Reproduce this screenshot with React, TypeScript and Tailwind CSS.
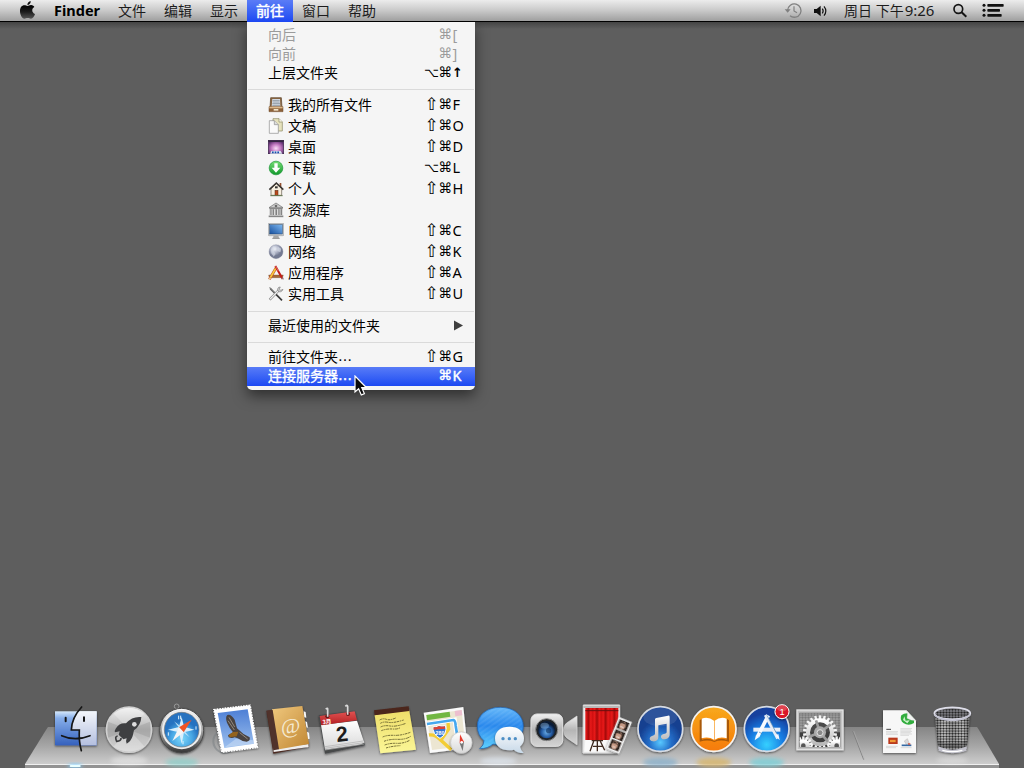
import type { ReactNode } from "react";

const UI_FONT = "font-['Noto_Sans','Noto_Sans_CJK_SC',sans-serif]";

/* ---------- menu bar ---------- */

function MenuBar() {
  return (
    <header className="relative flex h-[22px] w-full items-stretch border-b border-black bg-linear-to-b from-[#ececec] via-[#c9c9c9] to-[#9f9f9f] text-[14px] leading-[21px] text-[#1c1c1c]">
      <svg className="ml-[19px] h-[21px] w-[17px]" viewBox="57 0 51 63">
        <defs>
          <linearGradient id="apple" x1="0" y1="0" x2="0" y2="1">
            <stop offset="0" stopColor="#000" />
            <stop offset=".5" stopColor="#1c1c1c" />
            <stop offset="1" stopColor="#555" />
          </linearGradient>
        </defs>
        <path d="M82 15C82 8 87 4 92 3C93 10 88 15 82 15Z" fill="#111" />
        <path d="M82 18C86 18 88 15 93 15C98 15 102 18 103 21C94 26 95 38 105 42C103 49 98 56 93 56C89 56 87 54 83 54C79 54 77 56 73 56C66 56 60 44 60 34C60 22 66 16 73 16C77 16 80 18 82 18Z" fill="url(#apple)" />
      </svg>
      <span className="ml-[18px] w-[55px] text-[14.5px] font-bold text-black">Finder</span>
      <nav className="flex">
        <span className="w-[46px] pl-[9px]">文件</span>
        <span className="w-[46px] pl-[9px]">编辑</span>
        <span className="w-[46px] pl-[9px]">显示</span>
        <span className="z-10 h-[22px] w-[46px] bg-linear-to-b from-[#5b7cf6] to-[#1c46f2] pl-[9px] text-white [-webkit-text-stroke:0.5px_white]">前往</span>
        <span className="w-[46px] pl-[9px]">窗口</span>
        <span className="w-[46px] pl-[9px]">帮助</span>
      </nav>
      <div className="ml-auto flex pr-[20px]">
        <svg className="h-[21px] w-[19px]" viewBox="131 0 57 63" fill="none" stroke="#808080" strokeWidth="4">
          <path d="M142 31A20 20 0 1 1 149 47" />
          <path d="M133 28L142 38L151 28Z" fill="#808080" stroke="none" />
          <path d="M161 19V33L170 38" strokeWidth="3.5" />
        </svg>
        <svg className="ml-[10px] h-[21px] w-[16px]" viewBox="219 0 48 63">
          <path d="M222 27H230L242 17V49L230 39H222Z" fill="#111" />
          <path d="M247 26Q252 33 247 40M252 19Q263 33 252 47" fill="none" stroke="#111" strokeWidth="3.5" />
        </svg>
        <span className="ml-[15px] w-[92px] whitespace-nowrap">周日 下午<span className="ml-px text-[15px]">9:26</span></span>
        <svg className="ml-[16px] h-[21px] w-[16px]" viewBox="637 0 48 63" fill="none" stroke="#151515">
          <circle cx="656" cy="27" r="13" strokeWidth="5" />
          <path d="M665 36L680 50" strokeWidth="6" />
        </svg>
        <svg className="ml-[14px] h-[21px] w-[22px]" viewBox="727 0 66 63" fill="#111">
          <circle cx="733" cy="16" r="4.5" />
          <circle cx="733" cy="31" r="4.5" />
          <circle cx="733" cy="46" r="4.5" />
          <rect x="743" y="12" width="49" height="8" rx="2" />
          <rect x="743" y="27" width="38" height="8" rx="2" />
          <rect x="743" y="42" width="43" height="8" rx="2" />
        </svg>
      </div>
    </header>
  );
}

/* ---------- Go menu icons ---------- */

function Glyph({ y, children }: { y: number; children: ReactNode }) {
  return (
    <svg className="mr-[4px] size-4 shrink-0" viewBox={`84 ${y} 48 48`}>
      {children}
    </svg>
  );
}

const AllFilesIcon = (
  <Glyph y={291}>
    <path d="M92 293H124L126 322H90Z" fill="#8a6742" stroke="#5b4026" strokeWidth="2" />
    <path d="M97 297H120L121 320H95Z" fill="#dfe6ee" />
    <path d="M98 301H119M98 306H119M97 311H120M97 316H120" stroke="#66727f" strokeWidth="2" />
    <path d="M87 320H129V335H87Z" fill="#8e6239" stroke="#6c4724" strokeWidth="1.5" />
    <path d="M88 320H128V325H88Z" fill="#dcb98b" />
    <rect x="101" y="327" width="14" height="5" fill="#f1e5cb" />
  </Glyph>
);
const DocsIcon = (
  <Glyph y={354}>
    <path d="M99 356H117L127 366V393H99Z" fill="#e6e2bd" stroke="#88855f" strokeWidth="2" />
    <path d="M117 356V366H127" fill="#fffef0" stroke="#88855f" strokeWidth="2" />
    <path d="M88 362H103L115 374V400H88Z" fill="#fafafa" stroke="#8d8d8d" strokeWidth="2" />
    <path d="M103 362V374H115" fill="#ddd" stroke="#8d8d8d" strokeWidth="2" />
  </Glyph>
);
const DesktopIcon = (
  <Glyph y={417}>
    <defs>
      <radialGradient id="desk" cy=".6" r=".6">
        <stop offset="0" stopColor="#fbdcf8" />
        <stop offset=".5" stopColor="#c47bc2" />
        <stop offset="1" stopColor="#5a2c6c" />
      </radialGradient>
    </defs>
    <rect x="85" y="421" width="46" height="40" fill="url(#desk)" stroke="#3a2148" strokeWidth="2" />
    <rect x="85" y="421" width="46" height="5" fill="#342541" />
    <path d="M90 461L94 453H122L127 461Z" fill="#d9e2ef" />
    <path d="M96 457H101M104 457H109M112 457H117" stroke="#174cae" strokeWidth="5" />
  </Glyph>
);
const DownloadIcon = (
  <Glyph y={480}>
    <defs>
      <linearGradient id="dl" x1="0" y1="0" x2="0" y2="1">
        <stop stopColor="#78df76" />
        <stop offset="1" stopColor="#10982b" />
      </linearGradient>
    </defs>
    <circle cx="108" cy="504" r="20.5" fill="url(#dl)" stroke="#159330" strokeWidth="2" />
    <path d="M103 490H113V503H121L108 518L95 503H103Z" fill="#fff" />
  </Glyph>
);
const HomeIcon = (
  <Glyph y={543}>
    <path d="M119 549H124V566H119Z" fill="#924e2e" />
    <path d="M93 566L109 551L125 566V586H93Z" fill="#f7efdf" stroke="#5f554a" strokeWidth="2" />
    <path d="M88 569L109 549L130 569" fill="none" stroke="#393531" strokeWidth="4.5" />
    <rect x="105" y="571" width="9" height="15" fill="#ba491b" stroke="#50281a" strokeWidth="1.5" />
    <rect x="105" y="559" width="8" height="6" fill="#333" />
    <path d="M91 587H128" stroke="#61754c" strokeWidth="3" />
  </Glyph>
);
const LibraryIcon = (
  <Glyph y={21}>
    <path d="M87 38L108 24L129 38Z" fill="#ccc" stroke="#6a6a6a" strokeWidth="2" />
    <circle cx="108" cy="33" r="4" fill="#6b6b6b" />
    <path d="M88 41H128" stroke="#777" strokeWidth="3" />
    <path d="M92 43V60M100 43V60M108 43V60M116 43V60M124 43V60" stroke="#5c5c5c" strokeWidth="5" />
    <path d="M91 43V60M99 43V60M107 43V60M115 43V60M123 43V60" stroke="#d7d7d7" strokeWidth="2" />
    <path d="M86 64H130" stroke="#858585" strokeWidth="5" />
  </Glyph>
);
const ComputerIcon = (
  <Glyph y={84}>
    <defs>
      <linearGradient id="screen" x1="0" y1="1" x2="1" y2="0">
        <stop stopColor="#174f9d" />
        <stop offset="1" stopColor="#7db8f1" />
      </linearGradient>
    </defs>
    <path d="M101 121H115L117 129H99Z" fill="#aaa" />
    <rect x="85" y="85" width="46" height="37" rx="2" fill="#d2d2d2" stroke="#85898d" strokeWidth="1.5" />
    <rect x="89" y="89" width="38" height="28" fill="url(#screen)" stroke="#24466c" strokeWidth="1.5" />
    <path d="M97 130H119" stroke="#888" strokeWidth="3" />
  </Glyph>
);
const NetworkIcon = (
  <Glyph y={147}>
    <defs>
      <radialGradient id="globe" cx=".4" cy=".3">
        <stop stopColor="#f4f6fc" />
        <stop offset=".55" stopColor="#b1b6c8" />
        <stop offset="1" stopColor="#737a92" />
      </radialGradient>
    </defs>
    <circle cx="108" cy="170" r="21" fill="url(#globe)" stroke="#7e8499" />
    <path d="M93 163L101 154L108 158L101 168L107 177L101 185L94 175ZM113 155L124 161L121 172L112 168Z" fill="#d9deea" opacity=".6" />
  </Glyph>
);
const AppsIcon = (
  <Glyph y={210}>
    <path d="M86 240H130L127 248H88Z" fill="#a76938" stroke="#6e4527" />
    <path d="M108 219L88 253" stroke="#c54e22" strokeWidth="8" />
    <path d="M109 217L91 248" stroke="#f7cd3e" strokeWidth="5" />
    <path d="M106 213L128 252" stroke="#c31c19" strokeWidth="6" />
    <path d="M107 214L115 228" stroke="#e78c86" strokeWidth="2" />
    <path d="M88 247L86 256L94 251Z" fill="#ead0a4" />
    <path d="M124 249L131 255L129 247Z" fill="#888" />
  </Glyph>
);
const UtilitiesIcon = (
  <Glyph y={273}>
    <path d="M91 281L126 316" stroke="#383838" strokeWidth="5" />
    <path d="M89 279L108 298" stroke="#c5c5c5" strokeWidth="2" />
    <path d="M87 277L93 278L92 285Z" fill="#777" />
    <path d="M89 314L116 286" stroke="#777" strokeWidth="7" />
    <path d="M90 313L117 285" stroke="#eee" strokeWidth="4" />
    <path d="M121 276C114 275 111 282 114 288C119 293 127 290 129 283L122 286L118 282Z" fill="#c9c9c9" stroke="#666" strokeWidth="1.5" />
  </Glyph>
);

/* ---------- Go menu ---------- */

type Item = { label: string; keys?: string; icon?: ReactNode; disabled?: boolean; active?: boolean; submenu?: boolean };

const KEY_CLASS: Record<string, string> = {
  "⇧": "w-[14px] text-[17px]",
  "⌥": "w-[14px] text-[13px]",
  "⌘": "w-[13.5px] text-[14px]",
};

function Shortcut({ keys }: { keys: string }) {
  const parts = Array.from(keys);
  const last = parts.pop();
  return (
    <span className="ml-auto flex">
      {parts.map((k) => (
        <span key={k} className={`flex justify-center font-['DejaVu_Sans',sans-serif] ${KEY_CLASS[k]}`}>{k}</span>
      ))}
      <span className={last === "↑" ? "w-[11px] font-['DejaVu_Sans',sans-serif] text-[13px] font-bold" : "w-[11px] pl-[0.5px] text-[14.5px]"}>{last}</span>
    </span>
  );
}

function MenuItem({ item, tall }: { item: Item; tall?: boolean }) {
  return (
    <li
      className={`flex items-center pl-[21px] pr-[12px] pb-[2px] whitespace-nowrap ${tall ? "h-[21px] leading-[19px]" : "h-[19px] leading-[17px]"} ${
        item.active
          ? "bg-linear-to-b from-[#587bf7] to-[#1d48f2] text-white [-webkit-text-stroke:0.4px_white]"
          : item.disabled
            ? "text-[#9b9b9b]"
            : "text-black"
      }`}
    >
      {item.icon}
      <span>{item.label.replace("…", "")}</span>
      {item.label.endsWith("…") && <span className="tracking-normal font-['DejaVu_Sans',sans-serif]">…</span>}
      {item.keys && <Shortcut keys={item.keys} />}
      {item.submenu && (
        <svg className="ml-auto h-[11px] w-[9px]" viewBox="0 0 9 11">
          <path d="M0 .5L9 5.5L0 10.5Z" fill="#3f3f3f" />
        </svg>
      )}
    </li>
  );
}

function Separator() {
  return (
    <li className="flex h-[12px] items-center px-px">
      <span className="h-px w-full bg-[#dadada]" />
    </li>
  );
}

const NAVIGATION: Item[] = [
  { label: "向后", keys: "⌘[", disabled: true },
  { label: "向前", keys: "⌘]", disabled: true },
  { label: "上层文件夹", keys: "⌥⌘↑" },
];
const PLACES: Item[] = [
  { label: "我的所有文件", keys: "⇧⌘F", icon: AllFilesIcon },
  { label: "文稿", keys: "⇧⌘O", icon: DocsIcon },
  { label: "桌面", keys: "⇧⌘D", icon: DesktopIcon },
  { label: "下载", keys: "⌥⌘L", icon: DownloadIcon },
  { label: "个人", keys: "⇧⌘H", icon: HomeIcon },
  { label: "资源库", icon: LibraryIcon },
  { label: "电脑", keys: "⇧⌘C", icon: ComputerIcon },
  { label: "网络", keys: "⇧⌘K", icon: NetworkIcon },
  { label: "应用程序", keys: "⇧⌘A", icon: AppsIcon },
  { label: "实用工具", keys: "⇧⌘U", icon: UtilitiesIcon },
];

function GoMenu() {
  return (
    <ul className="ml-[247px] w-[228px] rounded-b-[5px] bg-[#f5f5f5] py-[4px] text-[14px] shadow-[0_6px_14px_rgba(0,0,0,0.5)]">
      {NAVIGATION.map((i) => <MenuItem key={i.label} item={i} />)}
      <Separator />
      {PLACES.map((i) => <MenuItem key={i.label} item={i} tall />)}
      <Separator />
      <MenuItem item={{ label: "最近使用的文件夹", submenu: true }} />
      <Separator />
      <MenuItem item={{ label: "前往文件夹…", keys: "⇧⌘G" }} />
      <MenuItem item={{ label: "连接服务器…", keys: "⌘K", active: true }} />
    </ul>
  );
}

/* ---------- dock ---------- */

function DockIcon({ x, children }: { x: number; children: ReactNode }) {
  return (
    <li className="w-[53px]">
      <svg className="h-[73px] w-[53px] overflow-visible" viewBox={`${x} 0 159 219`}>
        {children}
      </svg>
    </li>
  );
}

function DockDefs() {
  return (
    <svg className="absolute size-0">
      <defs>
        <linearGradient id="finderL" x1="0" y1="0" x2="0" y2="1"><stop stopColor="#d6e8fb" /><stop offset=".2" stopColor="#86aeea" /><stop offset="1" stopColor="#3561bd" /></linearGradient>
        <linearGradient id="finderR" x1="0" y1="0" x2="0" y2="1"><stop stopColor="#f3f6fb" /><stop offset="1" stopColor="#b4bfdf" /></linearGradient>
        <linearGradient id="metal" x1="0" y1="0" x2="0" y2="1"><stop stopColor="#f0f0f0" /><stop offset=".5" stopColor="#b5b5b5" /><stop offset="1" stopColor="#d4d4d4" /></linearGradient>
        <linearGradient id="rim" x1="0" y1="0" x2="0" y2="1"><stop stopColor="#fff" /><stop offset=".5" stopColor="#a7a7a7" /><stop offset="1" stopColor="#333" /></linearGradient>
        <radialGradient id="ocean" cy=".75"><stop stopColor="#7fd8fa" /><stop offset=".6" stopColor="#48a7e4" /><stop offset="1" stopColor="#2672c0" /></radialGradient>
        <linearGradient id="sky" x1="0" y1="0" x2="0" y2="1"><stop stopColor="#4d7fd5" /><stop offset="1" stopColor="#9dc0ee" /></linearGradient>
        <linearGradient id="leather" x1="0" y1="0" x2="1" y2="1"><stop stopColor="#f0c87e" /><stop offset="1" stopColor="#c08632" /></linearGradient>
        <linearGradient id="red" x1="0" y1="0" x2="0" y2="1"><stop stopColor="#e15352" /><stop offset="1" stopColor="#b31d20" /></linearGradient>
        <linearGradient id="page" x1="0" y1="0" x2="0" y2="1"><stop stopColor="#fff" /><stop offset="1" stopColor="#d8d8d8" /></linearGradient>
        <linearGradient id="note" x1="0" y1="0" x2="0" y2="1"><stop stopColor="#eedd68" /><stop offset="1" stopColor="#fbf798" /></linearGradient>
        <linearGradient id="bubble" x1="0" y1="0" x2="0" y2="1"><stop stopColor="#65b8fa" /><stop offset=".45" stopColor="#2a88ec" /><stop offset="1" stopColor="#5ed1ff" /></linearGradient>
        <linearGradient id="bubble2" x1="0" y1="0" x2="0" y2="1"><stop stopColor="#fff" /><stop offset="1" stopColor="#c8d9e8" /></linearGradient>
        <radialGradient id="lens" cx=".5" cy=".65"><stop stopColor="#6aaee8" /><stop offset=".6" stopColor="#2359a0" /><stop offset="1" stopColor="#0a1c38" /></radialGradient>
        <linearGradient id="curtain" x1="0" x2="13" y1="0" y2="0" gradientUnits="userSpaceOnUse" spreadMethod="reflect"><stop stopColor="#a30a0a" /><stop offset=".55" stopColor="#e81919" /><stop offset="1" stopColor="#d01010" /></linearGradient>
        <radialGradient id="tunes" cy=".8"><stop stopColor="#58c8ff" /><stop offset=".5" stopColor="#236dc8" /><stop offset="1" stopColor="#163f90" /></radialGradient>
        <linearGradient id="orange" x1="0" y1="0" x2="0" y2="1"><stop stopColor="#f8a91c" /><stop offset="1" stopColor="#f57a0a" /></linearGradient>
        <radialGradient id="store" cy=".85" r=".7"><stop stopColor="#35d0ff" /><stop offset=".55" stopColor="#177be2" /><stop offset="1" stopColor="#123f9d" /></radialGradient>
        <linearGradient id="gear" x1="0" y1="0" x2="0" y2="1"><stop stopColor="#fff" /><stop offset="1" stopColor="#b8b8b8" /></linearGradient>
        <linearGradient id="mesh" x1="0" x2="1"><stop stopColor="#777" /><stop offset=".25" stopColor="#c0c0c0" /><stop offset=".5" stopColor="#999" /><stop offset=".8" stopColor="#bbb" /><stop offset="1" stopColor="#666" /></linearGradient>
        <pattern id="wire" width="9" height="8" patternUnits="userSpaceOnUse"><path d="M0 4L4.500 1L9 4L4.500 7Z" fill="#1d1d1d" /></pattern>
        <pattern id="stripes" width="12" height="12" patternUnits="userSpaceOnUse" patternTransform="rotate(55)"><rect width="5" height="12" fill="#fff" opacity=".07" /></pattern>
        <filter id="soft" x="-50%" y="-50%" width="200%" height="200%"><feGaussianBlur stdDeviation="6" /></filter>
        <filter id="drop" x="-20%" y="-20%" width="140%" height="150%"><feDropShadow dx="0" dy="3" stdDeviation="3" floodOpacity=".55" /></filter>
      </defs>
    </svg>
  );
}

function Gear({ cx, cy, r, count, rim }: { cx: number; cy: number; r: number; count: number; rim: number }) {
  return (
    <g>
      {Array.from({ length: count }, (_, i) => (i * 360) / count).map((a) => (
        <rect key={a} x={cx - 3.5} y={cy - r - 9} width="7" height="13" fill="#f4f4f4" transform={`rotate(${a} ${cx} ${cy})`} />
      ))}
      <circle cx={cx} cy={cy} r={r - rim / 2} fill="none" stroke="url(#gear)" strokeWidth={rim} />
    </g>
  );
}

function Dock() {
  return (
    <footer className="relative mt-auto h-[73px] w-full">
      <div className="absolute inset-x-[25px] top-[32px] h-[37px] bg-linear-to-b from-[#858585] via-[#a5a5a5] to-[#cdcdcd] [clip-path:polygon(21px_3px,23px_0,952px_0,954px_3px,974px_37px,0_37px)]" />
      <div className="absolute inset-x-[25px] bottom-0 h-[4px] border-t border-[#f0f0f0] bg-[#939393]" />
      <DockDefs />
      <ul className="relative flex pl-[50px]">
        {/* Finder */}
        <DockIcon x={90}>
          <ellipse cx="165" cy="213" rx="22" ry="6" fill="#80cfff" filter="url(#soft)" />
          <rect x="149" y="210" width="33" height="6" rx="3" fill="#eaffff" />
          <g filter="url(#drop)">
            <rect x="105" y="49" width="125" height="102" fill="url(#finderL)" />
            <path d="M178 49H230V151H181L178 131V105H154Q157 72 178 49Z" fill="url(#finderR)" />
          </g>
          <path d="M185 36Q155 68 154 105H178Q176 138 184 167M125 122Q165 140 210 122" fill="none" stroke="#151515" strokeWidth="5" strokeLinecap="round" />
          <path d="M137 68V79M192 67V78" stroke="#161616" strokeWidth="6" strokeLinecap="round" />
        </DockIcon>
        {/* Launchpad */}
        <DockIcon x={249}>
          <ellipse cx="327" cy="197" rx="55" ry="14" fill="#eee" opacity=".5" filter="url(#soft)" />
          <circle cx="327" cy="104" r="68" fill="url(#metal)" stroke="#d0d0d0" strokeWidth="4" filter="url(#drop)" />
          <path d="M327 104L280 55Q327 25 374 55ZM327 104L280 155Q327 182 374 155Z" fill="#fff" opacity=".25" />
          <path d="M327 104L264 80V128ZM327 104L390 80V128Z" fill="#888" opacity=".3" />
          <path d="M364 66Q337 63 318 85Q299 82 287 101Q282 109 285 112L299 109L296 119L310 133L320 130Q316 140 320 146Q333 139 338 123L342 106Q363 91 364 66Z" fill="#3e3f41" />
          <circle cx="343" cy="88" r="7" fill="#ddd" />
          <path d="M293 123Q283 124 290 139Q304 138 303 129" fill="none" stroke="#3e3f41" strokeWidth="5" />
        </DockIcon>
        {/* Safari */}
        <DockIcon x={408}>
          <ellipse cx="485" cy="202" rx="50" ry="12" fill="#86cfc9" opacity=".7" filter="url(#soft)" />
          <circle cx="470" cy="34" r="7" fill="none" stroke="#999" strokeWidth="3" />
          <path d="M464 42H477L480 50H461Z" fill="#777" />
          <ellipse cx="485" cy="107" rx="66" ry="67" fill="url(#rim)" stroke="#4a4a4a" strokeWidth="3" filter="url(#drop)" />
          <circle cx="485" cy="104" r="59" fill="#ececec" />
          <circle cx="485" cy="104" r="52" fill="url(#ocean)" stroke="#777" strokeWidth="2" />
          <path d="M485 66L492 95L523 104L492 112L485 146L477 112L444 104L477 96Z" fill="#d8effd" />
          <path d="M462 79L484 96L509 127L488 111Z" fill="#bfe1f7" />
          <path d="M515 74L477 97L491 112Z" fill="#f15424" />
          <path d="M457 138L477 97L491 112Z" fill="#f5f5f5" />
          <path d="M476 62V73M482 73V62M528 94V104M445 112V122M489 138V148" stroke="#e0f5ff" strokeWidth="3" />
        </DockIcon>
        {/* Mail */}
        <DockIcon x={-3}>
          <circle cx="45" cy="139" r="35" fill="none" stroke="#777d82" strokeWidth="6" opacity=".5" />
          <circle cx="45" cy="139" r="23" fill="none" stroke="#777d82" strokeWidth="3" opacity=".4" />
          <g filter="url(#drop)">
            <path d="M12 44L120 31L142 157L36 171Z" fill="#fff" stroke="#fff" strokeWidth="5" strokeDasharray="5 3" />
          </g>
          <path d="M23 54L113 43L132 146L43 159Z" fill="url(#sky)" />
          <path d="M44 157L77 132L132 136V146Z" fill="#d1e2f5" opacity=".5" />
          <path d="M52 60Q62 56 74 74L81 100Q98 118 119 127Q122 138 110 140Q95 139 83 130L74 127Q66 131 56 127L54 121L69 112Q59 101 51 83Q45 67 52 60Z" fill="#4a4340" />
          <path d="M69 111L85 110L80 124L59 127L56 120Z" fill="#93631e" />
          <path d="M57 67L74 96M54 77L73 105M89 113L113 132" stroke="#948a7c" strokeWidth="3" />
        </DockIcon>
        {/* Contacts */}
        <DockIcon x={156}>
          <g filter="url(#drop)">
            <path d="M169 47L277 35L297 155L190 176Z" fill="#4c2c24" />
            <path d="M190 158L295 147L296 156L191 171Z" fill="#eee" />
            <path d="M186 43L277 33L297 147L207 163L191 159Z" fill="url(#leather)" />
          </g>
          <path d="M281 49L287 51L289 68L283 67ZM286 79L291 81L294 98L289 97ZM291 110L297 113L299 131L294 132Z" fill="#f8f8f8" />
          <path d="M170 47L188 45L207 163L190 166Z" fill="#50322b" />
          <text x="242" y="115" textAnchor="middle" fontFamily="Liberation Serif, serif" fontSize="64" fontStyle="italic" fill="#f5ead2" transform="rotate(-7 242 98)">@</text>
        </DockIcon>
        {/* Calendar */}
        <DockIcon x={315}>
          <g filter="url(#drop)">
            <path d="M326 61L434 47L465 151L345 176Z" fill="#46484a" />
            <path d="M333 90L441 77L463 143L448 149L345 164Z" fill="url(#page)" />
            <path d="M329 63L434 49L441 76L334 91Z" fill="url(#red)" />
          </g>
          <path d="M345 155L459 138M345 160L461 143M345 165L463 147" stroke="#adadad" strokeWidth="2" />
          <circle cx="352" cy="64" r="6" fill="#641719" />
          <circle cx="414" cy="57" r="6" fill="#641719" />
          <path d="M353 65V43Q354 38 347 42M413 59V34Q412 28 406 34" fill="none" stroke="#d9d9d9" strokeWidth="5" />
          <text x="338" y="88" fontFamily="Noto Sans CJK SC, sans-serif" fontSize="17" fontWeight="700" fill="#fff" transform="rotate(-7 338 88)">3月</text>
          <text x="399" y="139" textAnchor="middle" fontFamily="Liberation Sans, sans-serif" fontSize="64" fontWeight="700" fill="#1d1d1d" transform="rotate(-7 399 139)">2</text>
        </DockIcon>
        {/* Notes */}
        <DockIcon x={474}>
          <g filter="url(#drop)">
            <path d="M494 60L597 43L618 164L511 175Z" fill="url(#note)" />
            <path d="M492 46L596 34L598 48L494 61Z" fill="#4c251b" />
          </g>
          <g fill="none" stroke="#5d5728" strokeWidth="2.500" strokeDasharray="7 2 4 2 9 2">
            <path d="M509 75Q519 69 529 73T557 69" /><path d="M511 85Q521 79 535 82T581 75" /><path d="M512 96Q523 90 540 93T588 85" /><path d="M514 107Q529 101 547 102T570 98" />
            <path d="M518 126Q530 120 552 121T601 112" /><path d="M522 139Q539 132 563 133T602 124" /><path d="M524 150Q540 144 560 145T599 136" /><path d="M528 159Q547 153 571 152" />
          </g>
        </DockIcon>
        {/* Maps */}
        <DockIcon x={18}>
          <g filter="url(#drop)">
            <path d="M26 53L145 36L158 160L45 174Z" fill="#fafafa" />
            <path d="M34 60L140 45L151 153L51 165Z" fill="#ece6d2" />
          </g>
          <path d="M34 60L104 50L106 65L36 76Z" fill="#71b742" />
          <path d="M119 48L140 45L142 61L121 64Z" fill="#edbfcf" />
          <path d="M38 87L119 74L130 156" fill="none" stroke="#fff" strokeWidth="13" />
          <path d="M36 87L115 75Q121 76 122 92L126 117" fill="none" stroke="#45a8ef" strokeWidth="8" />
          <path d="M42 120Q58 117 76 134L109 164M80 132L101 102L99 84" fill="none" stroke="#f3cd35" strokeWidth="10" />
          <path d="M55 95Q62 97 72 92Q81 95 91 92Q98 117 75 130Q52 118 55 95Z" fill="#3579d3" stroke="#fff" strokeWidth="3" />
          <path d="M56 96Q62 98 72 93Q81 96 90 94L91 101L55 104Z" fill="#dd4334" />
          <text x="75" y="119" textAnchor="middle" fontFamily="Liberation Sans, sans-serif" fontSize="16" fontWeight="700" fill="#fff">280</text>
          <circle cx="139" cy="143" r="32" fill="url(#page)" stroke="#cacaca" strokeWidth="2" filter="url(#drop)" />
          <path d="M135 118L147 141L134 145Z" fill="#e73a2d" />
          <path d="M143 168L147 141L134 145Z" fill="#777" />
          <circle cx="140" cy="142" r="4" fill="#fff" />
        </DockIcon>
        {/* Messages */}
        <DockIcon x={177}>
          <ellipse cx="250" cy="198" rx="55" ry="12" fill="#e8f3ff" opacity=".5" filter="url(#soft)" />
          <path d="M256 37C296 37 325 60 325 94C325 127 294 150 256 150Q243 150 234 147Q219 161 194 161Q207 151 207 137Q187 120 187 94C187 60 216 37 256 37Z" fill="url(#bubble)" stroke="#1e5fae" strokeWidth="2" filter="url(#drop)" />
          <ellipse cx="256" cy="94" rx="65" ry="54" fill="url(#stripes)" />
          <path d="M283 95C310 95 327 109 327 130Q327 145 315 155Q317 166 326 174Q306 174 297 164Q292 166 283 166C257 166 240 152 240 130C240 109 257 95 283 95Z" fill="url(#bubble2)" filter="url(#drop)" />
          <circle cx="264" cy="131" r="5" fill="#4e8fc5" /><circle cx="283" cy="131" r="5" fill="#4e8fc5" /><circle cx="301" cy="131" r="5" fill="#4e8fc5" />
        </DockIcon>
        {/* FaceTime */}
        <DockIcon x={336}>
          <path d="M486 63V149L455 128Q446 121 446 105Q446 91 455 84Z" fill="url(#metal)" stroke="#ddd" strokeWidth="2" filter="url(#drop)" />
          <rect x="348" y="57" width="95" height="97" rx="18" fill="url(#metal)" stroke="#e0e0e0" strokeWidth="3" filter="url(#drop)" />
          <circle cx="395" cy="104" r="33" fill="#202326" stroke="#8b8b8b" strokeWidth="3" />
          <circle cx="395" cy="104" r="26" fill="url(#lens)" />
          <ellipse cx="389" cy="92" rx="13" ry="9" fill="#8ab4dc" opacity=".45" />
          <circle cx="401" cy="107" r="8" fill="#0c2b57" opacity=".6" />
        </DockIcon>
        {/* Photo Booth */}
        <DockIcon x={495}>
          <path d="M505 30H614V161L603 174H504Z" fill="#ececec" stroke="#ddd" strokeWidth="3" filter="url(#drop)" />
          <path d="M511 37H610V135H511Z" fill="url(#curtain)" />
          <path d="M505 32H614V39H505Z" fill="#b9b9b9" />
          <path d="M511 47H610" stroke="#681010" strokeWidth="3" />
          <path d="M511 135H610V170H508Z" fill="#fafafa" />
          <path d="M530 137H564M536 139L525 169M556 139L569 166M547 137V169M534 154H564" stroke="#3e2a20" strokeWidth="4" />
          <g transform="rotate(22 612 121)" filter="url(#drop)">
            <rect x="591" y="70" width="42" height="102" fill="#f8f8f8" stroke="#ccc" />
            {[75, 107, 139].map((y) => (
              <g key={y}>
                <rect x="596" y={y} width="32" height="28" fill="#332722" />
                <ellipse cx="611" cy={y + 15} rx="9" ry="12" fill="#c79a85" />
                <path d={`M601 ${y + 12}Q608 ${y - 4} 621 ${y + 12}Q611 ${y + 5} 601 ${y + 12}`} fill="#1c1615" />
                <path d={`M606 ${y + 20}H616`} stroke="#fff" strokeWidth="2" />
              </g>
            ))}
          </g>
        </DockIcon>
        {/* iTunes */}
        <DockIcon x={9}>
          <ellipse cx="91" cy="202" rx="52" ry="14" fill="#85aeca" opacity=".75" filter="url(#soft)" />
          <circle cx="91" cy="102" r="67" fill="url(#tunes)" stroke="#d6dbe3" strokeWidth="5" filter="url(#drop)" />
          <ellipse cx="91" cy="66" rx="51" ry="28" fill="#fff" opacity=".1" />
          <path d="M75 73Q75 70 79 69L114 62Q119 61 119 66V119C119 128 110 133 102 133C90 133 90 119 101 117Q110 116 110 110V86L85 91V127C85 135 78 140 69 139C55 137 57 124 68 122Q75 121 75 116Z" fill="url(#gear)" />
        </DockIcon>
        {/* iBooks */}
        <DockIcon x={168}>
          <ellipse cx="251" cy="202" rx="52" ry="14" fill="#d7b66e" opacity=".85" filter="url(#soft)" />
          <circle cx="251" cy="102" r="67" fill="url(#orange)" stroke="#f6f3ef" strokeWidth="5" filter="url(#drop)" />
          <path d="M209 76L216 71V134Q236 127 253 138Q270 127 290 134V71L297 76V140Q270 133 253 141Q235 133 209 140Z" fill="#a95909" />
          <path d="M215 71Q235 64 252 77V134Q235 123 215 130ZM254 77Q271 64 290 71V130Q271 123 254 134Z" fill="#fff" />
        </DockIcon>
        {/* App Store */}
        <DockIcon x={327}>
          <ellipse cx="410" cy="202" rx="52" ry="14" fill="#7eced6" opacity=".85" filter="url(#soft)" />
          <circle cx="410" cy="102" r="67" fill="url(#store)" stroke="#d5dbe4" strokeWidth="5" filter="url(#drop)" />
          <path d="M370 98H451V110H370Z" fill="#e6edf7" />
          <path d="M415 61L383 124" stroke="#f8fbff" strokeWidth="11" />
          <path d="M378 120L388 126L374 136Z" fill="#f8fbff" />
          <path d="M406 60L443 131" stroke="#e5ecf6" strokeWidth="9" />
          <path d="M411 61L440 116M387 111L396 116" stroke="#467aa9" strokeWidth="2" />
          <path d="M436 122L449 136L445 117Z" fill="#f3f7ff" />
          <circle cx="456" cy="50" r="21" fill="#da1827" stroke="#fff" strokeWidth="3" filter="url(#drop)" />
          <ellipse cx="456" cy="40" rx="15" ry="9" fill="#fff" opacity=".2" />
          <text x="456" y="59" textAnchor="middle" fontFamily="Liberation Sans, sans-serif" fontSize="28" fill="#fff">1</text>
        </DockIcon>
        {/* System Preferences */}
        <DockIcon x={486}>
          <clipPath id="prefs"><rect x="509" y="54" width="121" height="102" /></clipPath>
          <rect x="501" y="45" width="138" height="119" fill="#c4c4c4" stroke="#e4e4e4" strokeWidth="4" filter="url(#drop)" />
          <rect x="509" y="54" width="121" height="102" fill="#9a9a9a" stroke="#777" strokeWidth="2" />
          <rect x="509" y="54" width="121" height="102" fill="url(#wire)" opacity=".3" />
          <g clipPath="url(#prefs)">
            <circle cx="570" cy="114" r="42" fill="#4a4a4a" />
            <path d="M509 156V112H630V156Z" fill="#3f3f3f" />
            <Gear cx={570} cy={112} r={42} count={22} rim={12} />
            <path d="M570 112L558 76M570 112L602 88M570 112L536 126M570 112L594 140" stroke="#9b9b9b" strokeWidth="8" />
            <circle cx="570" cy="112" r="18" fill="#aaa" />
            <circle cx="570" cy="113" r="9" fill="#8a8a8a" stroke="#e0e0e0" strokeWidth="3" />
            <circle cx="520" cy="152" r="22" fill="#555" />
            <Gear cx={520} cy={152} r={19} count={14} rim={12} />
            <circle cx="620" cy="152" r="22" fill="#555" />
            <Gear cx={620} cy={152} r={19} count={14} rim={12} />
          </g>
        </DockIcon>
        <li className="w-[27px]">
          <svg className="h-[73px] w-[27px]" viewBox="15 0 81 219">
            <path d="M38 108L71 194" stroke="#7c7c7c" strokeWidth="2.500" />
            <path d="M41 108L74 194" stroke="#b4b4b4" strokeWidth="1.500" />
          </svg>
        </li>
        {/* Document */}
        <DockIcon x={96}>
          <path d="M129 46H199L228 77V174H129Z" fill="#f7f7f7" filter="url(#drop)" />
          <path d="M184 61Q193 53 207 55L222 71V84Q206 95 190 84Q178 74 184 61Z" fill="#32ad3e" />
          <path d="M193 64L197 77L209 76L202 85L189 75Z" fill="#cef2cb" />
          <path d="M199 46L228 77Q211 77 201 70Q205 57 199 46Z" fill="#f3f3f3" stroke="#ccc" />
          <path d="M139 103H153" stroke="#444" strokeWidth="3" />
          <path d="M138 110H174M138 114H172M138 118H174M181 101H216M181 105H213M181 109H216M181 113H212M181 117H216M181 121H207M138 154H173M138 158H168M182 158H215" stroke="#bcbcbc" strokeWidth="1.5" />
          <rect x="145" y="128" width="28" height="19" fill="#b9391d" />
          <path d="M150 138H167" stroke="#f09a35" strokeWidth="7" />
          <path d="M193 138L202 131L208 145L199 149Z" fill="#d9d9dc" stroke="#a59b95" />
          <path d="M185 151H214" stroke="#366aa4" strokeWidth="5" />
          <path d="M204 147H211" stroke="#ca4430" strokeWidth="4" />
        </DockIcon>
        {/* Trash */}
        <DockIcon x={255}>
          <ellipse cx="337" cy="196" rx="47" ry="10" fill="#eee" opacity=".4" filter="url(#soft)" />
          <path d="M283 49L295 166Q337 183 380 166L391 49Z" fill="url(#mesh)" filter="url(#drop)" />
          <path d="M283 49L295 166Q337 183 380 166L391 49Z" fill="url(#wire)" />
          <path d="M292 138Q337 150 382 138L380 160H294Z" fill="#222" opacity=".35" />
          <ellipse cx="337" cy="55" rx="54" ry="18" fill="#77777c" stroke="#dddde8" strokeWidth="5" />
          <ellipse cx="337" cy="56" rx="50" ry="14" fill="url(#wire)" />
          <path d="M283 59Q300 76 337 76Q373 76 391 59" fill="none" stroke="#c2c2d0" strokeWidth="5" />
          <path d="M294 154Q337 174 381 154L379 168Q337 182 296 168Z" fill="#c0c0ca" />
          <path d="M307 166Q337 174 367 166" fill="none" stroke="#fff" strokeWidth="4" />
        </DockIcon>
      </ul>
    </footer>
  );
}

export default function App() {
  return (
    <div className={`relative flex h-[768px] w-[1024px] flex-col overflow-hidden bg-[#5e5e5e] ${UI_FONT}`}>
      <MenuBar />
      <main className="bg-linear-to-b from-[#444] to-[#5e5e5e] to-[7px]">
        <GoMenu />
      </main>
      <svg className="absolute left-[354px] top-[375px] h-[21px] w-[13px]" viewBox="0 0 13 21">
        <path d="M1 1V17L4.6 13.7L7.3 20L10.4 18.6L7.7 12.5H12.3Z" fill="#0a0a0a" stroke="#fff" strokeWidth="1.2" />
      </svg>
      <Dock />
    </div>
  );
}
